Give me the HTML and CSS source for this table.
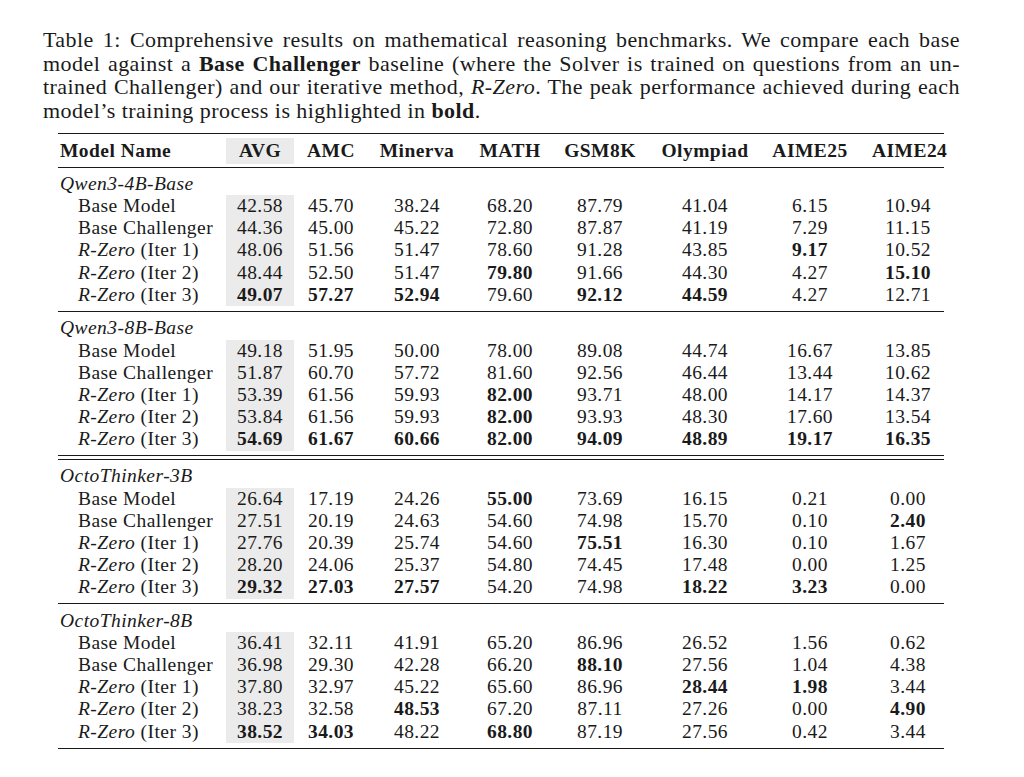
FILE: index.html
```html
<!DOCTYPE html>
<html lang="en">
<head>
<meta charset="utf-8">
<title>Table 1</title>
<link rel="stylesheet" href="styles.css">
</head>
<body>
<div class="page">
  <p class="caption">
    <span class="line">Table 1: Comprehensive results on mathematical reasoning benchmarks. We compare each base</span>
    <span class="line">model against a <b>Base Challenger</b> baseline (where the Solver is trained on questions from an un-</span>
    <span class="line">trained Challenger) and our iterative method, <i>R-Zero</i>. The peak performance achieved during each</span>
    <span class="line last">model’s training process is highlighted in <b>bold</b>.</span>
  </p>
  <table class="results">
    <colgroup>
      <col class="c-name"><col class="c-avg"><col class="c-amc"><col class="c-min"><col class="c-math"><col class="c-gsm"><col class="c-oly"><col class="c-a25"><col class="c-a24">
    </colgroup>
    <thead>
      <tr>
        <th class="name">Model Name</th><th class="avg">AVG</th><th>AMC</th><th>Minerva</th><th>MATH</th><th>GSM8K</th><th>Olympiad</th><th>AIME25</th><th class="last">AIME24</th>
      </tr>
    </thead>
    <tbody class="group">
      <tr class="label"><td class="name" colspan="9"><i>Qwen3-4B-Base</i></td></tr>
      <tr><td class="model">Base Model</td><td class="avg">42.58</td><td>45.70</td><td>38.24</td><td>68.20</td><td>87.79</td><td>41.04</td><td>6.15</td><td class="last">10.94</td></tr>
      <tr><td class="model">Base Challenger</td><td class="avg">44.36</td><td>45.00</td><td>45.22</td><td>72.80</td><td>87.87</td><td>41.19</td><td>7.29</td><td class="last">11.15</td></tr>
      <tr><td class="model"><i>R-Zero</i> (Iter 1)</td><td class="avg">48.06</td><td>51.56</td><td>51.47</td><td>78.60</td><td>91.28</td><td>43.85</td><td><b>9.17</b></td><td class="last">10.52</td></tr>
      <tr><td class="model"><i>R-Zero</i> (Iter 2)</td><td class="avg">48.44</td><td>52.50</td><td>51.47</td><td><b>79.80</b></td><td>91.66</td><td>44.30</td><td>4.27</td><td class="last"><b>15.10</b></td></tr>
      <tr class="end"><td class="model"><i>R-Zero</i> (Iter 3)</td><td class="avg"><b>49.07</b></td><td><b>57.27</b></td><td><b>52.94</b></td><td>79.60</td><td><b>92.12</b></td><td><b>44.59</b></td><td>4.27</td><td class="last">12.71</td></tr>
    </tbody>
    <tbody class="group">
      <tr class="label"><td class="name" colspan="9"><i>Qwen3-8B-Base</i></td></tr>
      <tr><td class="model">Base Model</td><td class="avg">49.18</td><td>51.95</td><td>50.00</td><td>78.00</td><td>89.08</td><td>44.74</td><td>16.67</td><td class="last">13.85</td></tr>
      <tr><td class="model">Base Challenger</td><td class="avg">51.87</td><td>60.70</td><td>57.72</td><td>81.60</td><td>92.56</td><td>46.44</td><td>13.44</td><td class="last">10.62</td></tr>
      <tr><td class="model"><i>R-Zero</i> (Iter 1)</td><td class="avg">53.39</td><td>61.56</td><td>59.93</td><td><b>82.00</b></td><td>93.71</td><td>48.00</td><td>14.17</td><td class="last">14.37</td></tr>
      <tr><td class="model"><i>R-Zero</i> (Iter 2)</td><td class="avg">53.84</td><td>61.56</td><td>59.93</td><td><b>82.00</b></td><td>93.93</td><td>48.30</td><td>17.60</td><td class="last">13.54</td></tr>
      <tr class="end"><td class="model"><i>R-Zero</i> (Iter 3)</td><td class="avg"><b>54.69</b></td><td><b>61.67</b></td><td><b>60.66</b></td><td><b>82.00</b></td><td><b>94.09</b></td><td><b>48.89</b></td><td><b>19.17</b></td><td class="last"><b>16.35</b></td></tr>
    </tbody>
    <tbody class="double-gap">
      <tr><td colspan="9"></td></tr>
    </tbody>
    <tbody class="group">
      <tr class="label"><td class="name" colspan="9"><i>OctoThinker-3B</i></td></tr>
      <tr><td class="model">Base Model</td><td class="avg">26.64</td><td>17.19</td><td>24.26</td><td><b>55.00</b></td><td>73.69</td><td>16.15</td><td>0.21</td><td class="last">0.00</td></tr>
      <tr><td class="model">Base Challenger</td><td class="avg">27.51</td><td>20.19</td><td>24.63</td><td>54.60</td><td>74.98</td><td>15.70</td><td>0.10</td><td class="last"><b>2.40</b></td></tr>
      <tr><td class="model"><i>R-Zero</i> (Iter 1)</td><td class="avg">27.76</td><td>20.39</td><td>25.74</td><td>54.60</td><td><b>75.51</b></td><td>16.30</td><td>0.10</td><td class="last">1.67</td></tr>
      <tr><td class="model"><i>R-Zero</i> (Iter 2)</td><td class="avg">28.20</td><td>24.06</td><td>25.37</td><td>54.80</td><td>74.45</td><td>17.48</td><td>0.00</td><td class="last">1.25</td></tr>
      <tr class="end"><td class="model"><i>R-Zero</i> (Iter 3)</td><td class="avg"><b>29.32</b></td><td><b>27.03</b></td><td><b>27.57</b></td><td>54.20</td><td>74.98</td><td><b>18.22</b></td><td><b>3.23</b></td><td class="last">0.00</td></tr>
    </tbody>
    <tbody class="group final">
      <tr class="label"><td class="name" colspan="9"><i>OctoThinker-8B</i></td></tr>
      <tr><td class="model">Base Model</td><td class="avg">36.41</td><td>32.11</td><td>41.91</td><td>65.20</td><td>86.96</td><td>26.52</td><td>1.56</td><td class="last">0.62</td></tr>
      <tr><td class="model">Base Challenger</td><td class="avg">36.98</td><td>29.30</td><td>42.28</td><td>66.20</td><td><b>88.10</b></td><td>27.56</td><td>1.04</td><td class="last">4.38</td></tr>
      <tr><td class="model"><i>R-Zero</i> (Iter 1)</td><td class="avg">37.80</td><td>32.97</td><td>45.22</td><td>65.60</td><td>86.96</td><td><b>28.44</b></td><td><b>1.98</b></td><td class="last">3.44</td></tr>
      <tr><td class="model"><i>R-Zero</i> (Iter 2)</td><td class="avg">38.23</td><td>32.58</td><td><b>48.53</b></td><td>67.20</td><td>87.11</td><td>27.26</td><td>0.00</td><td class="last"><b>4.90</b></td></tr>
      <tr class="end"><td class="model"><i>R-Zero</i> (Iter 3)</td><td class="avg"><b>38.52</b></td><td><b>34.03</b></td><td>48.22</td><td><b>68.80</b></td><td>87.19</td><td>27.56</td><td>0.42</td><td class="last">3.44</td></tr>
    </tbody>
  </table>
</div>
</body>
</html>
```
FILE: styles.css
```css
html, body {
  margin: 0;
  padding: 0;
  background: #ffffff;
}

body {
  font-family: "Liberation Serif", "Times New Roman", serif;
  color: #1a1a1a;
}

.page {
  padding: 28px 0 0 43px;
  width: 917px;
}

.caption {
  margin: 0;
  font-size: 22px;
  line-height: 23.5px;
  letter-spacing: 0.45px;
}

.caption .line {
  display: block;
  white-space: nowrap;
  text-align: justify;
  text-align-last: justify;
}

.caption .line.last {
  text-align-last: left;
}

.results {
  margin: 11px 0 0 15px;
  width: 886px;
  border-collapse: collapse;
  font-size: 19.5px;
  letter-spacing: 0.45px;
  table-layout: fixed;
}

.c-name { width: 168px; }
.c-avg  { width: 68px; }
.c-amc  { width: 74px; }
.c-min  { width: 98px; }
.c-math { width: 88px; }
.c-gsm  { width: 92px; }
.c-oly  { width: 118px; }
.c-a25  { width: 92px; }
.c-a24  { width: 88px; }

.results th,
.results td {
  padding: 0;
  text-align: center;
  white-space: nowrap;
}

.results thead tr {
  border-top: 1.5px solid #1a1a1a;
  border-bottom: 1px solid #1a1a1a;
}

.results th {
  font-weight: bold;
  line-height: 25px;
  padding: 4px 0 3.5px;
}

.results th.name,
.results td.name {
  text-align: left;
  padding-left: 2px;
}

.results td.model {
  text-align: left;
  padding-left: 20px;
}

.results .last {
  padding-left: 16px;
}

.results th.avg,
.results td.avg {
  background: #ebebeb;
  background-clip: content-box;
}

.results tbody.group tr td {
  line-height: 22.15px;
}

.results tbody.group tr.label td {
  padding-top: 5.5px;
}

.results tbody.group tr.end td {
  padding-bottom: 5px;
}

.results tbody.group {
  border-bottom: 1px solid #1a1a1a;
}

.results tbody.group.final {
  border-bottom: 1.5px solid #1a1a1a;
}

.results tbody.double-gap td {
  height: 2.5px;
  padding: 0;
  line-height: 0;
  font-size: 0;
}

.results tbody.double-gap {
  border-bottom: 1px solid #1a1a1a;
}
```
